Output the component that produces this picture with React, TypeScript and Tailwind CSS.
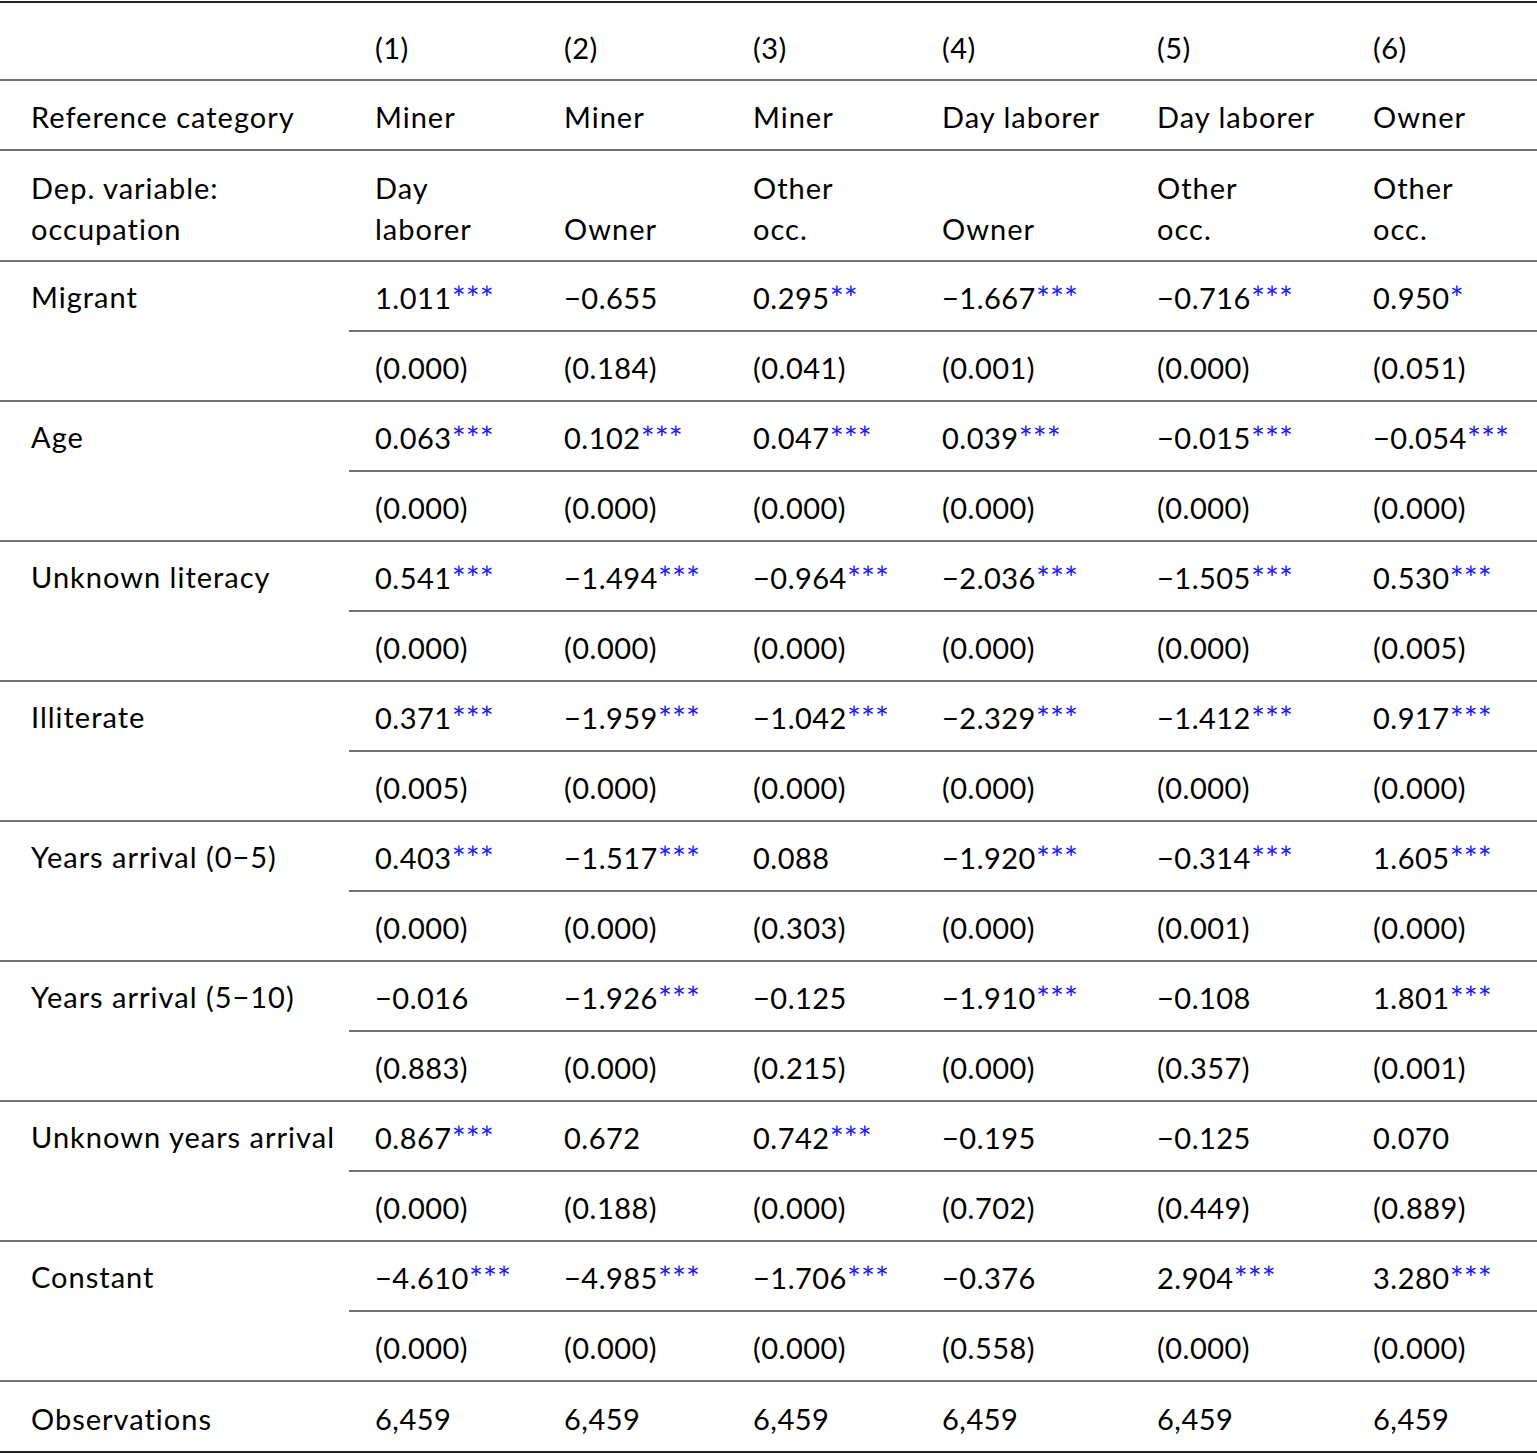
import React from "react";

// regression table: multinomial logit, occupation by migrant status
type Coef = [string, string];

const rows: { label: string; coef: Coef[]; p: string[] }[] = [
  {
    label: "Migrant",
    coef: [["1.011", "***"], ["−0.655", ""], ["0.295", "**"], ["−1.667", "***"], ["−0.716", "***"], ["0.950", "*"]],
    p: ["(0.000)", "(0.184)", "(0.041)", "(0.001)", "(0.000)", "(0.051)"],
  },
  {
    label: "Age",
    coef: [["0.063", "***"], ["0.102", "***"], ["0.047", "***"], ["0.039", "***"], ["−0.015", "***"], ["−0.054", "***"]],
    p: ["(0.000)", "(0.000)", "(0.000)", "(0.000)", "(0.000)", "(0.000)"],
  },
  {
    label: "Unknown literacy",
    coef: [["0.541", "***"], ["−1.494", "***"], ["−0.964", "***"], ["−2.036", "***"], ["−1.505", "***"], ["0.530", "***"]],
    p: ["(0.000)", "(0.000)", "(0.000)", "(0.000)", "(0.000)", "(0.005)"],
  },
  {
    label: "Illiterate",
    coef: [["0.371", "***"], ["−1.959", "***"], ["−1.042", "***"], ["−2.329", "***"], ["−1.412", "***"], ["0.917", "***"]],
    p: ["(0.005)", "(0.000)", "(0.000)", "(0.000)", "(0.000)", "(0.000)"],
  },
  {
    label: "Years arrival (0−5)",
    coef: [["0.403", "***"], ["−1.517", "***"], ["0.088", ""], ["−1.920", "***"], ["−0.314", "***"], ["1.605", "***"]],
    p: ["(0.000)", "(0.000)", "(0.303)", "(0.000)", "(0.001)", "(0.000)"],
  },
  {
    label: "Years arrival (5−10)",
    coef: [["−0.016", ""], ["−1.926", "***"], ["−0.125", ""], ["−1.910", "***"], ["−0.108", ""], ["1.801", "***"]],
    p: ["(0.883)", "(0.000)", "(0.215)", "(0.000)", "(0.357)", "(0.001)"],
  },
  {
    label: "Unknown years arrival",
    coef: [["0.867", "***"], ["0.672", ""], ["0.742", "***"], ["−0.195", ""], ["−0.125", ""], ["0.070", ""]],
    p: ["(0.000)", "(0.188)", "(0.000)", "(0.702)", "(0.449)", "(0.889)"],
  },
  {
    label: "Constant",
    coef: [["−4.610", "***"], ["−4.985", "***"], ["−1.706", "***"], ["−0.376", ""], ["2.904", "***"], ["3.280", "***"]],
    p: ["(0.000)", "(0.000)", "(0.000)", "(0.558)", "(0.000)", "(0.000)"],
  },
];

const cols = "grid grid-cols-[349px_189px_189px_189px_215px_216px_1fr]";
const cell = "flex items-center pl-[26px] pt-[4px] whitespace-nowrap tracking-[0.5px]";
const label = "flex items-center pl-[31px] pt-[4px] whitespace-nowrap tracking-[1px]";

const Stars = ({ s }: { s: string }) =>
  s ? (
    <span className="relative top-[1px] text-[33px] leading-none tracking-normal text-[#1a1aff]">{s}</span>
  ) : null;

const App = () => {
  return (
    <div
      className="w-[1537px] bg-white pt-px text-[29px] text-black"
      style={{ fontFamily: "Lato, 'Open Sans', sans-serif" }}
    >
      {/* column numbers */}
      <div className={`${cols} h-[80px] border-t-2 border-b-2 border-t-[#222] border-b-[#707070]`}>
        <div />
        {["(1)", "(2)", "(3)", "(4)", "(5)", "(6)"].map((h) => (
          <div key={h} className="flex items-center pl-[26px] pt-[14px] tracking-[0.5px]">
            {h}
          </div>
        ))}
      </div>

      <div className={`${cols} h-[70px] border-b-2 border-[#707070]`}>
        <div className={label}>Reference category</div>
        {["Miner", "Miner", "Miner", "Day laborer", "Day laborer", "Owner"].map((h, i) => (
          <div key={i} className={`${cell} tracking-[1px]`}>
            {h}
          </div>
        ))}
      </div>

      <div className={`${cols} h-[111px] border-b-2 border-[#707070] leading-[41px]`}>
        <div className={label}>
          <div>
            Dep. variable:
            <br />
            occupation
          </div>
        </div>
        {[
          ["Day", "laborer"],
          ["", "Owner"],
          ["Other", "occ."],
          ["", "Owner"],
          ["Other", "occ."],
          ["Other", "occ."],
        ].map(([a, b], i) => (
          <div key={i} className={`${cell} tracking-[1px]`}>
            <div>
              {a || "\u00a0"}
              <br />
              {b}
            </div>
          </div>
        ))}
      </div>

      {rows.map((r) => (
        <div key={r.label} className={`${cols} grid-rows-[68px_70px] border-b-2 border-[#707070]`}>
          <div className="row-span-2 pl-[31px] pt-[13px] whitespace-nowrap tracking-[1px]">{r.label}</div>
          {r.coef.map(([v, s], i) => (
            <div key={i} className={cell}>
              <span>
                {v}
                <Stars s={s} />
              </span>
            </div>
          ))}
          {r.p.map((v, i) => (
            <div key={i} className={`${cell} border-t-2 border-[#707070]`}>
              {v}
            </div>
          ))}
        </div>
      ))}

      <div className={`${cols} h-[71px] border-b-2 border-[#222]`}>
        <div className={label}>Observations</div>
        {Array.from({ length: 6 }).map((_, i) => (
          <div key={i} className={cell}>
            6,459
          </div>
        ))}
      </div>
    </div>
  );
};

export default App;
